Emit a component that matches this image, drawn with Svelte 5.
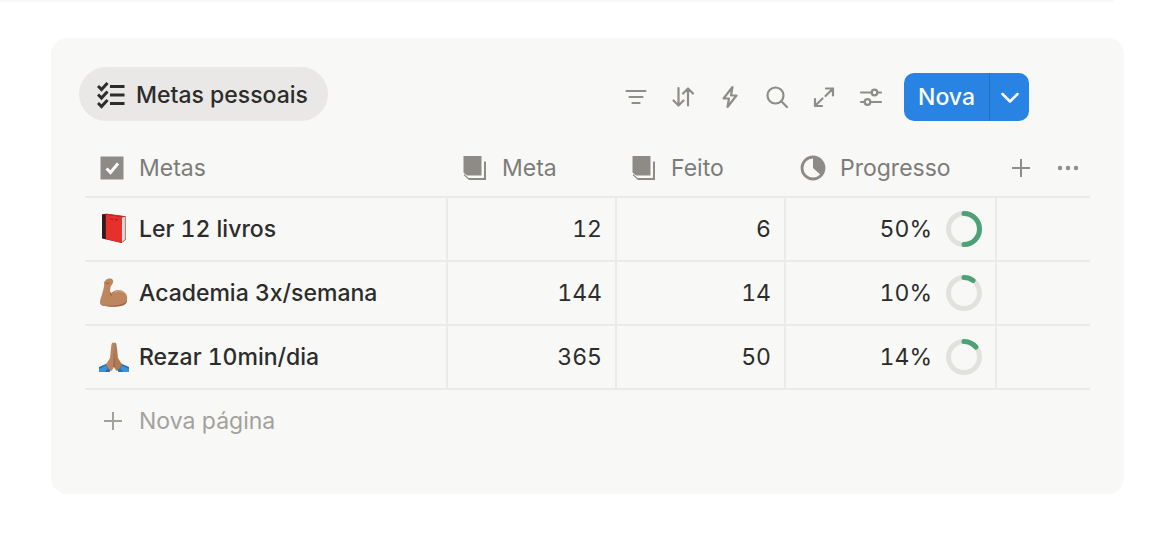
<script lang="ts">
  const goals = [
    { icon: 'book', name: 'Ler 12 livros', target: 12, done: 6 },
    { icon: 'arm', name: 'Academia 3x/semana', target: 144, done: 14 },
    { icon: 'hands', name: 'Rezar 10min/dia', target: 365, done: 50 },
  ];

  const tools = ['Filtrar', 'Ordenar', 'Automações', 'Buscar', 'Expandir', 'Configurações'];

  function pct(goal) {
    return Math.round((goal.done / goal.target) * 100);
  }
</script>

{#snippet plus()}
  <svg class="plus" viewBox="0 0 20 20" aria-hidden="true"><path d="M10 1v18M1 10h18" /></svg>
{/snippet}

{#snippet pages()}
  <svg class="prop" viewBox="0 0 26 26" aria-hidden="true">
    <path class="solid" d="M1.500 1h18v19.500H4l-2.500-2z" />
    <path class="solid" d="M1.500 18v2.500L7 25.500h17.500V6H21.500v16.500H6.500z" />
  </svg>
{/snippet}

<div class="strip"></div>

<section class="card">
  <header class="toolbar">
    <button class="view">
      <svg class="list" viewBox="0 0 28 28" aria-hidden="true">
        <path d="M1 5l3.500 3.500L10.500 2M1 13.500l3.500 3.500 6-6.500M1 22l3.500 3.500 6-6.500M13 5.500h14.500M13 14h14.500M13 22.500h14.500" />
      </svg>
      Metas pessoais
    </button>

    <div class="tools">
      {#each tools as tool, i}
        <button class="tool" aria-label={tool}>
          <svg viewBox="0 0 24 24" aria-hidden="true">
            {#if i === 0}
              <path d="M2.500 6h19M5.500 12h13M8.500 18h7" />
            {:else if i === 1}
              <path d="M7.500 3v17M2.500 15.500l5 5 5-5M17 20.500V4M12 8.500l5-5 5 5" />
            {:else if i === 2}
              <path d="M14.500 2L5.500 13.500h5.500L9.500 22l9-11.500H13z" />
            {:else if i === 3}
              <circle cx="10.500" cy="10.500" r="8" /><path d="M16.500 16.500l5.500 5.500" />
            {:else if i === 4}
              <path d="M14 3.500h7v7M21 3.500l-7.500 7.500M10 21H3v-7M3 21l7.500-7.500" />
            {:else}
              <path d="M2 7.500h10.500M18.500 7.500h3.500M2 17h3.500M11.500 17H22" />
              <circle cx="15.500" cy="7.500" r="2.800" /><circle cx="8.500" cy="17" r="2.800" />
            {/if}
          </svg>
        </button>
      {/each}
      <div class="split">
        <button class="new">Nova</button>
        <button class="more" aria-label="Mais opções">
          <svg viewBox="0 0 20 20" aria-hidden="true"><path d="M2.500 7l7.500 7.500L17.500 7" /></svg>
        </button>
      </div>
    </div>
  </header>

  <table>
    <colgroup>
      <col />
      <col class="col-num" />
      <col class="col-num" />
      <col class="col-progress" />
      <col class="col-actions" />
    </colgroup>
    <thead>
      <tr>
        <th scope="col">
          <div class="head">
            <svg class="prop" viewBox="0 0 26 26" aria-hidden="true">
              <path class="solid" d="M1.500 1.500h23v23h-23z" />
              <path class="tick" d="M7.500 13.500l4 4 7.500-9" />
            </svg>
            Metas
          </div>
        </th>
        <th scope="col"><div class="head">{@render pages()}Meta</div></th>
        <th scope="col"><div class="head">{@render pages()}Feito</div></th>
        <th scope="col">
          <div class="head">
            <svg class="prop" viewBox="0 0 26 26" aria-hidden="true">
              <circle cx="13" cy="13" r="11" />
              <path class="solid" d="M13 3a10 10 0 0 1 7.500 16.800L13 13z" />
            </svg>
            Progresso
          </div>
        </th>
        <td>
          <div class="actions">
            <button aria-label="Adicionar propriedade">{@render plus()}</button>
            <button aria-label="Opções da tabela">
              <svg class="dots" viewBox="0 0 22 22" aria-hidden="true">
                <circle cx="3" cy="11" r="2.200" /><circle cx="11" cy="11" r="2.200" /><circle cx="19" cy="11" r="2.200" />
              </svg>
            </button>
          </div>
        </td>
      </tr>
    </thead>
    <tbody>
      {#each goals as goal}
        <tr>
          <td>
            <div class="name">
              <svg class="emoji" viewBox="0 0 32 32" aria-hidden="true">
                {#if goal.icon === 'book'}
                  <path d="M4.500 1.200L8 .800l20 2.600v23.200l-4.500 3.500-19-4.500z" fill="#8d1718" />
                  <path d="M24 4.500l3.500-.700v22.500L24 29z" fill="#efe9e6" />
                  <path d="M25.200 4.500v23.200M26.400 4.200v22.500" stroke="#bdb3b0" stroke-width=".5" />
                  <path d="M7 1.500l17 2.600V29.700L7 26z" fill="#e5302b" />
                  <path d="M7 1.300l2-.5 19 2.500-4 1z" fill="#c9252a" />
                  <path d="M4 1.200l3.800.5V26.200L4 25.200z" fill="#35181c" />
                  <path d="M12.500 6l2.500.4M17 6.600l3 .4" stroke="#8d1a1d" stroke-width="1" />
                {:else if goal.icon === 'arm'}
                  <path
                    d="M8 3c1.500-2 6.500-2.200 7 .5.500 2-.500 3.500-2 5.500-1 2-1 4.500-.500 7.500 3.500-3.500 8-4.500 12-2.500 6 3 6 10 1.500 13C21 30 9 30 3.500 28c-2.500-1-1.500-5 .500-10.500C5.500 12 6.500 9 6 6c0-1.500 1-2 2-3z"
                    fill="#bd865f"
                  />
                  <path d="M3 27.500C10 29.500 20 29 25.500 26.500c2-1 3-2.500 3.500-4.500.500 3-1 5.500-4 6.500-7 2-16 1.500-22-.5z" fill="#99663f" />
                  <path d="M12.500 15.500c-.500 2 .500 3 1.500 3.500M8 6c1.500 1 3 .500 3.500-.500" fill="none" stroke="#94603d" stroke-width="1" />
                  <path d="M17 15c3-1.700 6-1.500 8.500.5" fill="none" stroke="#d3a17a" stroke-width="1.500" />
                {:else}
                  <path d="M1 26l8-3.500 5 4.500-2.500 4H1zM31 26l-8-3.500-5 4.500 2.500 4H31z" fill="#2470b8" />
                  <path d="M1 28l7-3.500 1.500 3L7 31H1zM31 28l-7-3.500-1.500 3L25 31h6z" fill="#3d92d6" />
                  <path d="M15.500 1.500c-2 0-2 2-2.500 6L12 17l-4 6.500c1 3 3 5 5.500 6.500l2.500-4z" fill="#bd845f" />
                  <path d="M16.500 1.500c2 0 2 2 2.500 6l1 9.500 4 6.500c-1 3-3 5-5.500 6.500L16 26z" fill="#b07a55" />
                  <path d="M16 2v24" fill="none" stroke="#875438" stroke-width="1" />
                {/if}
              </svg>
              {goal.name}
            </div>
          </td>
          <td class="num">{goal.target}</td>
          <td class="num">{goal.done}</td>
          <td>
            <div class="progress">
              {pct(goal)}%
              <svg class="ring" viewBox="0 0 36 36" aria-hidden="true">
                <circle cx="18" cy="18" r="15.500" />
                <circle class="fill" cx="18" cy="18" r="15.500" pathLength="100" stroke-dasharray="{pct(goal)} 100" />
              </svg>
            </div>
          </td>
          <td></td>
        </tr>
      {/each}
    </tbody>
  </table>

  <button class="new-page">{@render plus()}Nova página</button>
</section>

<style>
  :global(body) {
    margin: 0;
    background: #fff;
    color: #2c2c2b;
    font-family: Inter, 'Liberation Sans', sans-serif;
    font-size: 23px;
    line-height: 28px;
  }

  button {
    margin: 0; padding: 0; border: 0;
    background: none; color: inherit; font: inherit;
    cursor: pointer;
  }

  svg { display: block; flex-shrink: 0; }

  .strip { height: 2px; margin-right: 50px; background: #f7f7f7; }

  .card {
    margin: 36px 39px 0 51px;
    padding: 29px 34px 42px 28px;
    border-radius: 16px;
    background: #f8f8f7;
  }

  /* Toolbar */
  .toolbar {
    display: flex; align-items: flex-end; justify-content: space-between;
    padding-right: 61px;
  }

  .view {
    display: flex; align-items: center; gap: 11px;
    height: 54px; padding: 1px 20px 0 18px;
    border-radius: 27px; background: #e9e8e6;
    font-weight: 500;
  }

  .list {
    width: 28px; height: 28px;
    fill: none; stroke: #2c2c2b; stroke-width: 3;
  }

  .tools { display: flex; align-items: center; }

  .tool {
    display: flex; align-items: center; justify-content: center;
    width: 47px; height: 48px;
  }

  .tool svg {
    width: 24px; height: 24px;
    fill: none; stroke: #8e8d89; stroke-width: 2.200;
    stroke-linecap: round; stroke-linejoin: round;
  }

  .split {
    display: flex;
    height: 48px; margin-left: 10px;
    border-radius: 10px; overflow: hidden;
    background: #2883e2; color: #fff;
  }

  .new { padding: 0 14px; font-weight: 500; }

  .more {
    display: flex; align-items: center; justify-content: center;
    width: 40px; border-left: 1px solid #2270c4;
  }

  .more svg {
    width: 20px; height: 20px;
    fill: none; stroke: #fff; stroke-width: 2.500;
    stroke-linecap: round; stroke-linejoin: round;
  }

  /* Table */
  table {
    width: calc(100% - 6px);
    margin: 17px 0 0 6px;
    border-collapse: separate; border-spacing: 0;
    table-layout: fixed;
    font-variant-numeric: tabular-nums;
  }

  .col-num { width: 169px; }
  .col-progress { width: 211px; }
  .col-actions { width: 93px; }

  th, td {
    box-sizing: border-box;
    height: 64px; padding: 0;
    border-bottom: 2px solid #ebebea;
  }

  thead th, thead td { height: 60px; }

  th { color: #7d7c78; font-weight: 400; text-align: left; }

  tbody td:not(:last-child) { border-right: 2px solid #ebebea; }

  .head { display: flex; align-items: center; gap: 14px; padding: 1px 0 0 14px; }

  .prop {
    width: 26px; height: 26px;
    fill: none; stroke: #8e8b86; stroke-width: 2.800;
  }

  .prop .solid { fill: #8e8b86; stroke: none; }
  .prop .solid + .solid { stroke: #f8f8f7; stroke-width: 1; }
  .prop .tick { stroke: #fff; stroke-width: 3; }

  .actions {
    display: flex; align-items: center; gap: 26px;
    padding: 1px 0 0 14px;
    color: #8e8d89;
  }

  .plus {
    width: 20px; height: 20px;
    fill: none; stroke: currentColor; stroke-width: 2;
  }

  .dots { width: 22px; height: 22px; fill: #8e8d89; }

  .name {
    display: flex; align-items: center; gap: 9px;
    padding-left: 13px; font-weight: 500;
  }

  .emoji { width: 32px; height: 32px; }

  .num { padding-right: 13px; text-align: right; }

  .progress {
    display: flex; align-items: center; justify-content: flex-end; gap: 14px;
    padding-right: 13px;
  }

  .ring { width: 36px; height: 36px; transform: rotate(-90deg); }
  .ring circle { fill: none; stroke: #e1e1de; stroke-width: 5; }
  .ring .fill { stroke: #4ca274; stroke-linecap: round; }

  .new-page {
    display: flex; align-items: center; gap: 16px;
    height: 62px; margin-left: 6px; padding-left: 18px;
    color: #a3a19c;
  }
</style>
